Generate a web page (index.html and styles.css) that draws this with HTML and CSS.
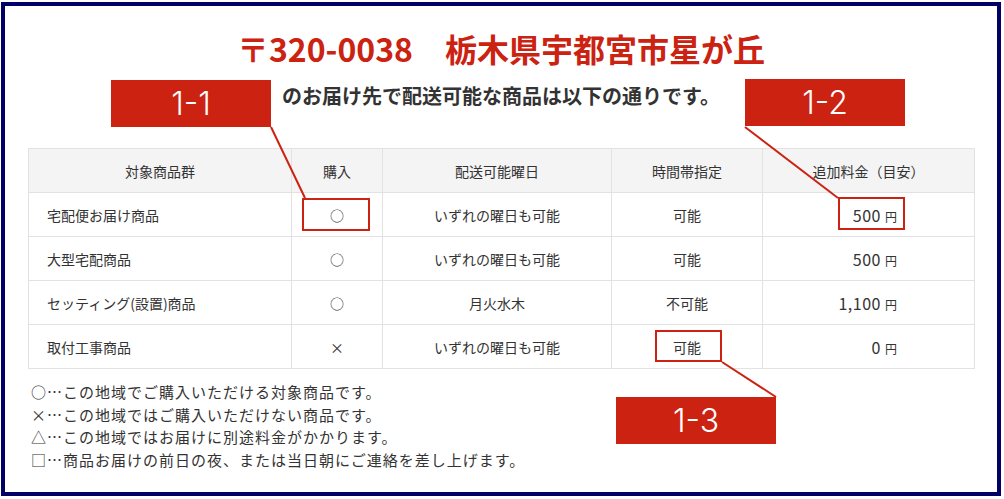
FILE: index.html
```html
<!DOCTYPE html>
<html lang="ja">
<head>
<meta charset="UTF-8">
<title>配送可能商品</title>
<link rel="stylesheet" href="styles.css">
</head>
<body>
    <div class="frame">
        <h1 class="title">〒320-0038　栃木県宇都宮市星が丘</h1>
        <p class="lead">のお届け先で配送可能な商品は以下の通りです。</p>
        <table class="items">
            <colgroup>
                <col style="width:263px">
                <col style="width:91px">
                <col style="width:229px">
                <col style="width:151px">
                <col style="width:212px">
            </colgroup>
            <tr>
                <th>対象商品群</th>
                <th>購入</th>
                <th>配送可能曜日</th>
                <th>時間帯指定</th>
                <th>追加料金（目安）</th>
            </tr>
            <tr>
                <td class="name">宅配便お届け商品</td>
                <td>○</td>
                <td>いずれの曜日も可能</td>
                <td>可能</td>
                <td class="price">500 <span>円</span></td>
            </tr>
            <tr>
                <td class="name">大型宅配商品</td>
                <td>○</td>
                <td>いずれの曜日も可能</td>
                <td>可能</td>
                <td class="price">500 <span>円</span></td>
            </tr>
            <tr>
                <td class="name">セッティング(設置)商品</td>
                <td>○</td>
                <td>月火水木</td>
                <td>不可能</td>
                <td class="price">1,100 <span>円</span></td>
            </tr>
            <tr>
                <td class="name">取付工事商品</td>
                <td>×</td>
                <td>いずれの曜日も可能</td>
                <td>可能</td>
                <td class="price">0 <span>円</span></td>
            </tr>
        </table>
        <div class="legend">
            <p>○…この地域でご購入いただける対象商品です。</p>
            <p>×…この地域ではご購入いただけない商品です。</p>
            <p>△…この地域ではお届けに別途料金がかかります。</p>
            <p>□…商品お届けの前日の夜、または当日朝にご連絡を差し上げます。</p>
        </div>
    </div>

    <!-- annotation layer -->
    <svg class="lines" width="1004" height="499" viewBox="0 0 1004 499">
        <line x1="271" y1="127" x2="305" y2="198"/>
        <line x1="745" y1="127" x2="838" y2="198"/>
        <line x1="776" y1="397" x2="722" y2="362"/>
    </svg>
    <div class="mark mark-buy"></div>
    <div class="mark mark-price"></div>
    <div class="mark mark-time"></div>
    <div class="tag tag-1">1-1</div>
    <div class="tag tag-2">1-2</div>
    <div class="tag tag-3">1-3</div>
</body>
</html>
```

FILE: styles.css
```css
body {
    margin: 0;
    padding: 0;
    position: relative;
    width: 1004px;
    height: 499px;
    background-color: #fff;
    font-family: "Noto Sans CJK JP", "Noto Sans", sans-serif;
    color: #333;
}
.frame {
    box-sizing: border-box;
    width: 1000px;
    height: 494px;
    margin: 2px 0 0 1px;
    border: 4px solid #000066;
    padding: 0 23px 0 23px;
}
.title {
    margin: 22px 0 0;
    font-size: 32px;
    line-height: 40px;
    font-weight: bold;
    color: #cc2211;
    text-align: center;
}
.lead {
    margin: 14px 0 0;
    font-size: 20px;
    line-height: 28px;
    font-weight: bold;
    color: #333;
    text-align: center;
}
.items {
    margin-top: 38px;
    width: 946px;
    border-collapse: collapse;
    table-layout: fixed;
    font-size: 14px;
}
.items th,
.items td {
    height: 43px;
    padding: 0;
    border: 1px solid #e2e2e2;
    text-align: center;
    font-weight: normal;
}
.items th {
    background-color: #f4f4f4;
}
.items td.name {
    text-align: left;
    padding-left: 18px;
}
.items td.price {
    text-align: right;
    padding-right: 77px;
    font-size: 16px;
    letter-spacing: 0.5px;
}
.items td.price span {
    font-size: 12px;
    letter-spacing: 0;
}
.legend {
    margin-top: 12px;
    padding-left: 3px;
    font-size: 15px;
    letter-spacing: 1px;
}
.legend p {
    margin: 0;
    line-height: 22.5px;
}
.lines {
    position: absolute;
    left: 0;
    top: 0;
}
.lines line {
    stroke: #cc2211;
    stroke-width: 2;
}
.mark {
    position: absolute;
    box-sizing: border-box;
    border: 2px solid #cc2211;
}
.mark-buy {
    left: 302px;
    top: 198px;
    width: 68px;
    height: 33px;
}
.mark-price {
    left: 838px;
    top: 197px;
    width: 67px;
    height: 33px;
}
.mark-time {
    left: 655px;
    top: 330px;
    width: 67px;
    height: 32px;
}
.tag {
    position: absolute;
    width: 160px;
    height: 47px;
    background-color: #cc2211;
    color: #fff;
    font-family: Inter, "Open Sans", sans-serif;
    font-weight: 300;
    font-size: 32px;
    line-height: 47px;
    text-align: center;
}
.tag-1 {
    left: 111px;
    top: 80px;
}
.tag-2 {
    left: 745px;
    top: 79px;
}
.tag-3 {
    left: 616px;
    top: 397px;
}
```
